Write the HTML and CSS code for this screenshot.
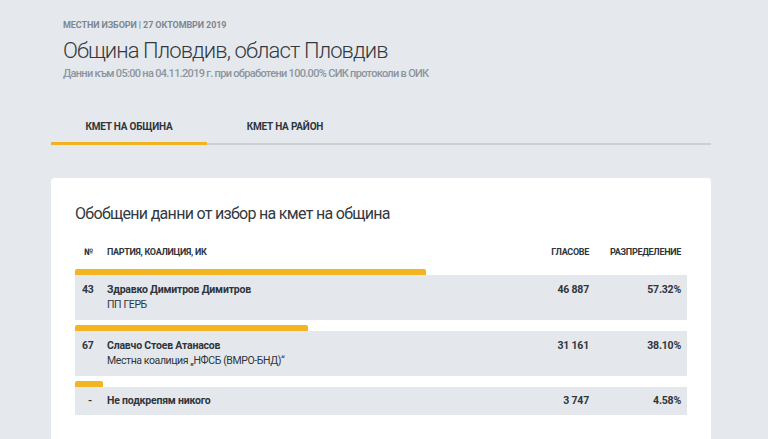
FILE: index.html
```html
<!DOCTYPE html>
<html lang="bg">
<head>
<meta charset="utf-8">
<title>Община Пловдив</title>
<link rel="stylesheet" href="styles.css">
</head>
<body>
<div class="page">
  <header class="head">
    <div class="kicker">МЕСТНИ ИЗБОРИ | 27 ОКТОМВРИ 2019</div>
    <h1 class="title">Община Пловдив, област Пловдив</h1>
    <div class="sub">Данни към 05:00 на 04.11.2019 г. при обработени 100.00% СИК протоколи в ОИК</div>
  </header>
  <nav class="tabs">
    <div class="tab active">КМЕТ НА ОБЩИНА</div>
    <div class="tab">КМЕТ НА РАЙОН</div>
  </nav>
  <section class="card">
    <h2 class="card-title">Обобщени данни от избор на кмет на община</h2>
    <div class="grid thead">
      <div class="c-num">№</div>
      <div class="c-name">ПАРТИЯ, КОАЛИЦИЯ, ИК</div>
      <div class="c-votes">ГЛАСОВЕ</div>
      <div class="c-pct">РАЗПРЕДЕЛЕНИЕ</div>
    </div>
    <div class="entry">
      <div class="bar" style="width:57.32%"></div>
      <div class="grid row">
        <div class="c-num">43</div>
        <div class="c-name"><div class="cand">Здравко Димитров Димитров</div><div class="party">ПП ГЕРБ</div></div>
        <div class="c-votes">46 887</div>
        <div class="c-pct">57.32%</div>
      </div>
    </div>
    <div class="entry">
      <div class="bar" style="width:38.10%"></div>
      <div class="grid row">
        <div class="c-num">67</div>
        <div class="c-name"><div class="cand">Славчо Стоев Атанасов</div><div class="party">Местна коалиция „НФСБ (ВМРО-БНД)“</div></div>
        <div class="c-votes">31 161</div>
        <div class="c-pct">38.10%</div>
      </div>
    </div>
    <div class="entry">
      <div class="bar" style="width:4.58%"></div>
      <div class="grid row">
        <div class="c-num dash">-</div>
        <div class="c-name"><div class="cand">Не подкрепям никого</div></div>
        <div class="c-votes">3 747</div>
        <div class="c-pct">4.58%</div>
      </div>
    </div>
  </section>
</div>
</body>
</html>
```

FILE: styles.css
```css
* { box-sizing: border-box; }
html, body { margin: 0; padding: 0; }
body {
  background: #e5e9ed;
  font-family: Roboto, "Noto Sans", "DejaVu Sans", sans-serif;
  color: #33393f;
}
.page {
  width: 660px;
  margin-left: 51px;
  padding-top: 19px;
}
.head { padding-left: 12px; }
.kicker {
  font-size: 9px;
  font-weight: 700;
  color: #7d8791;
  line-height: 12px;
  letter-spacing: -0.1px;
}
.title {
  margin: 7px 0 0;
  font-size: 22px;
  font-weight: 300;
  line-height: 26px;
  color: #33393f;
  letter-spacing: -0.9px;
}
.sub {
  margin-top: 3px;
  font-size: 11px;
  font-weight: 500;
  line-height: 14px;
  color: #8c959e;
  letter-spacing: -0.7px;
}
.tabs {
  display: flex;
  margin-top: 28px;
  border-bottom: 2px solid #cdd1d5;
}
.tab {
  width: 156px;
  text-align: center;
  font-size: 10px;
  font-weight: 700;
  color: #2f353b;
  line-height: 14px;
  padding: 11px 0 9px;
  letter-spacing: -0.2px;
}
.tab.active {
  box-shadow: inset 0 -3px 0 #f0b323;
  margin-bottom: -2px;
  padding-bottom: 11px;
}
.card {
  margin-top: 33px;
  background: #fff;
  border-radius: 4px;
  padding: 26px 24px 20px;
  height: 280px;
}
.card-title {
  margin: 0;
  font-size: 16px;
  font-weight: 400;
  line-height: 20px;
  color: #33393f;
  letter-spacing: -0.7px;
}
.grid {
  display: grid;
  grid-template-columns: 25px 1fr 90px 92px;
  padding: 0 6px 0 7px;
}
.thead {
  margin-top: 22px;
  font-size: 9px;
  font-weight: 700;
  line-height: 12px;
  color: #2f353b;
  letter-spacing: -0.3px;
  margin-bottom: 11px;
}
.thead .c-num { padding-left: 2px; }
.c-votes, .c-pct { text-align: right; }
.entry { margin-bottom: 5px; }
.bar {
  height: 6px;
  background: #f2b521;
  border-radius: 2px 2px 0 0;
}
.row {
  background: #e4e8ec;
  padding-top: 7px;
  padding-bottom: 8px;
  font-size: 10.5px;
  line-height: 15px;
  color: #2f353b;
}
.row .c-num, .row .c-votes, .row .c-pct, .cand { font-weight: 700; letter-spacing: -0.2px; }
.party { letter-spacing: -0.4px; }
.dash { padding-left: 6px; }
.entry:last-child .row { padding-top: 6px; padding-bottom: 7px; }
```
